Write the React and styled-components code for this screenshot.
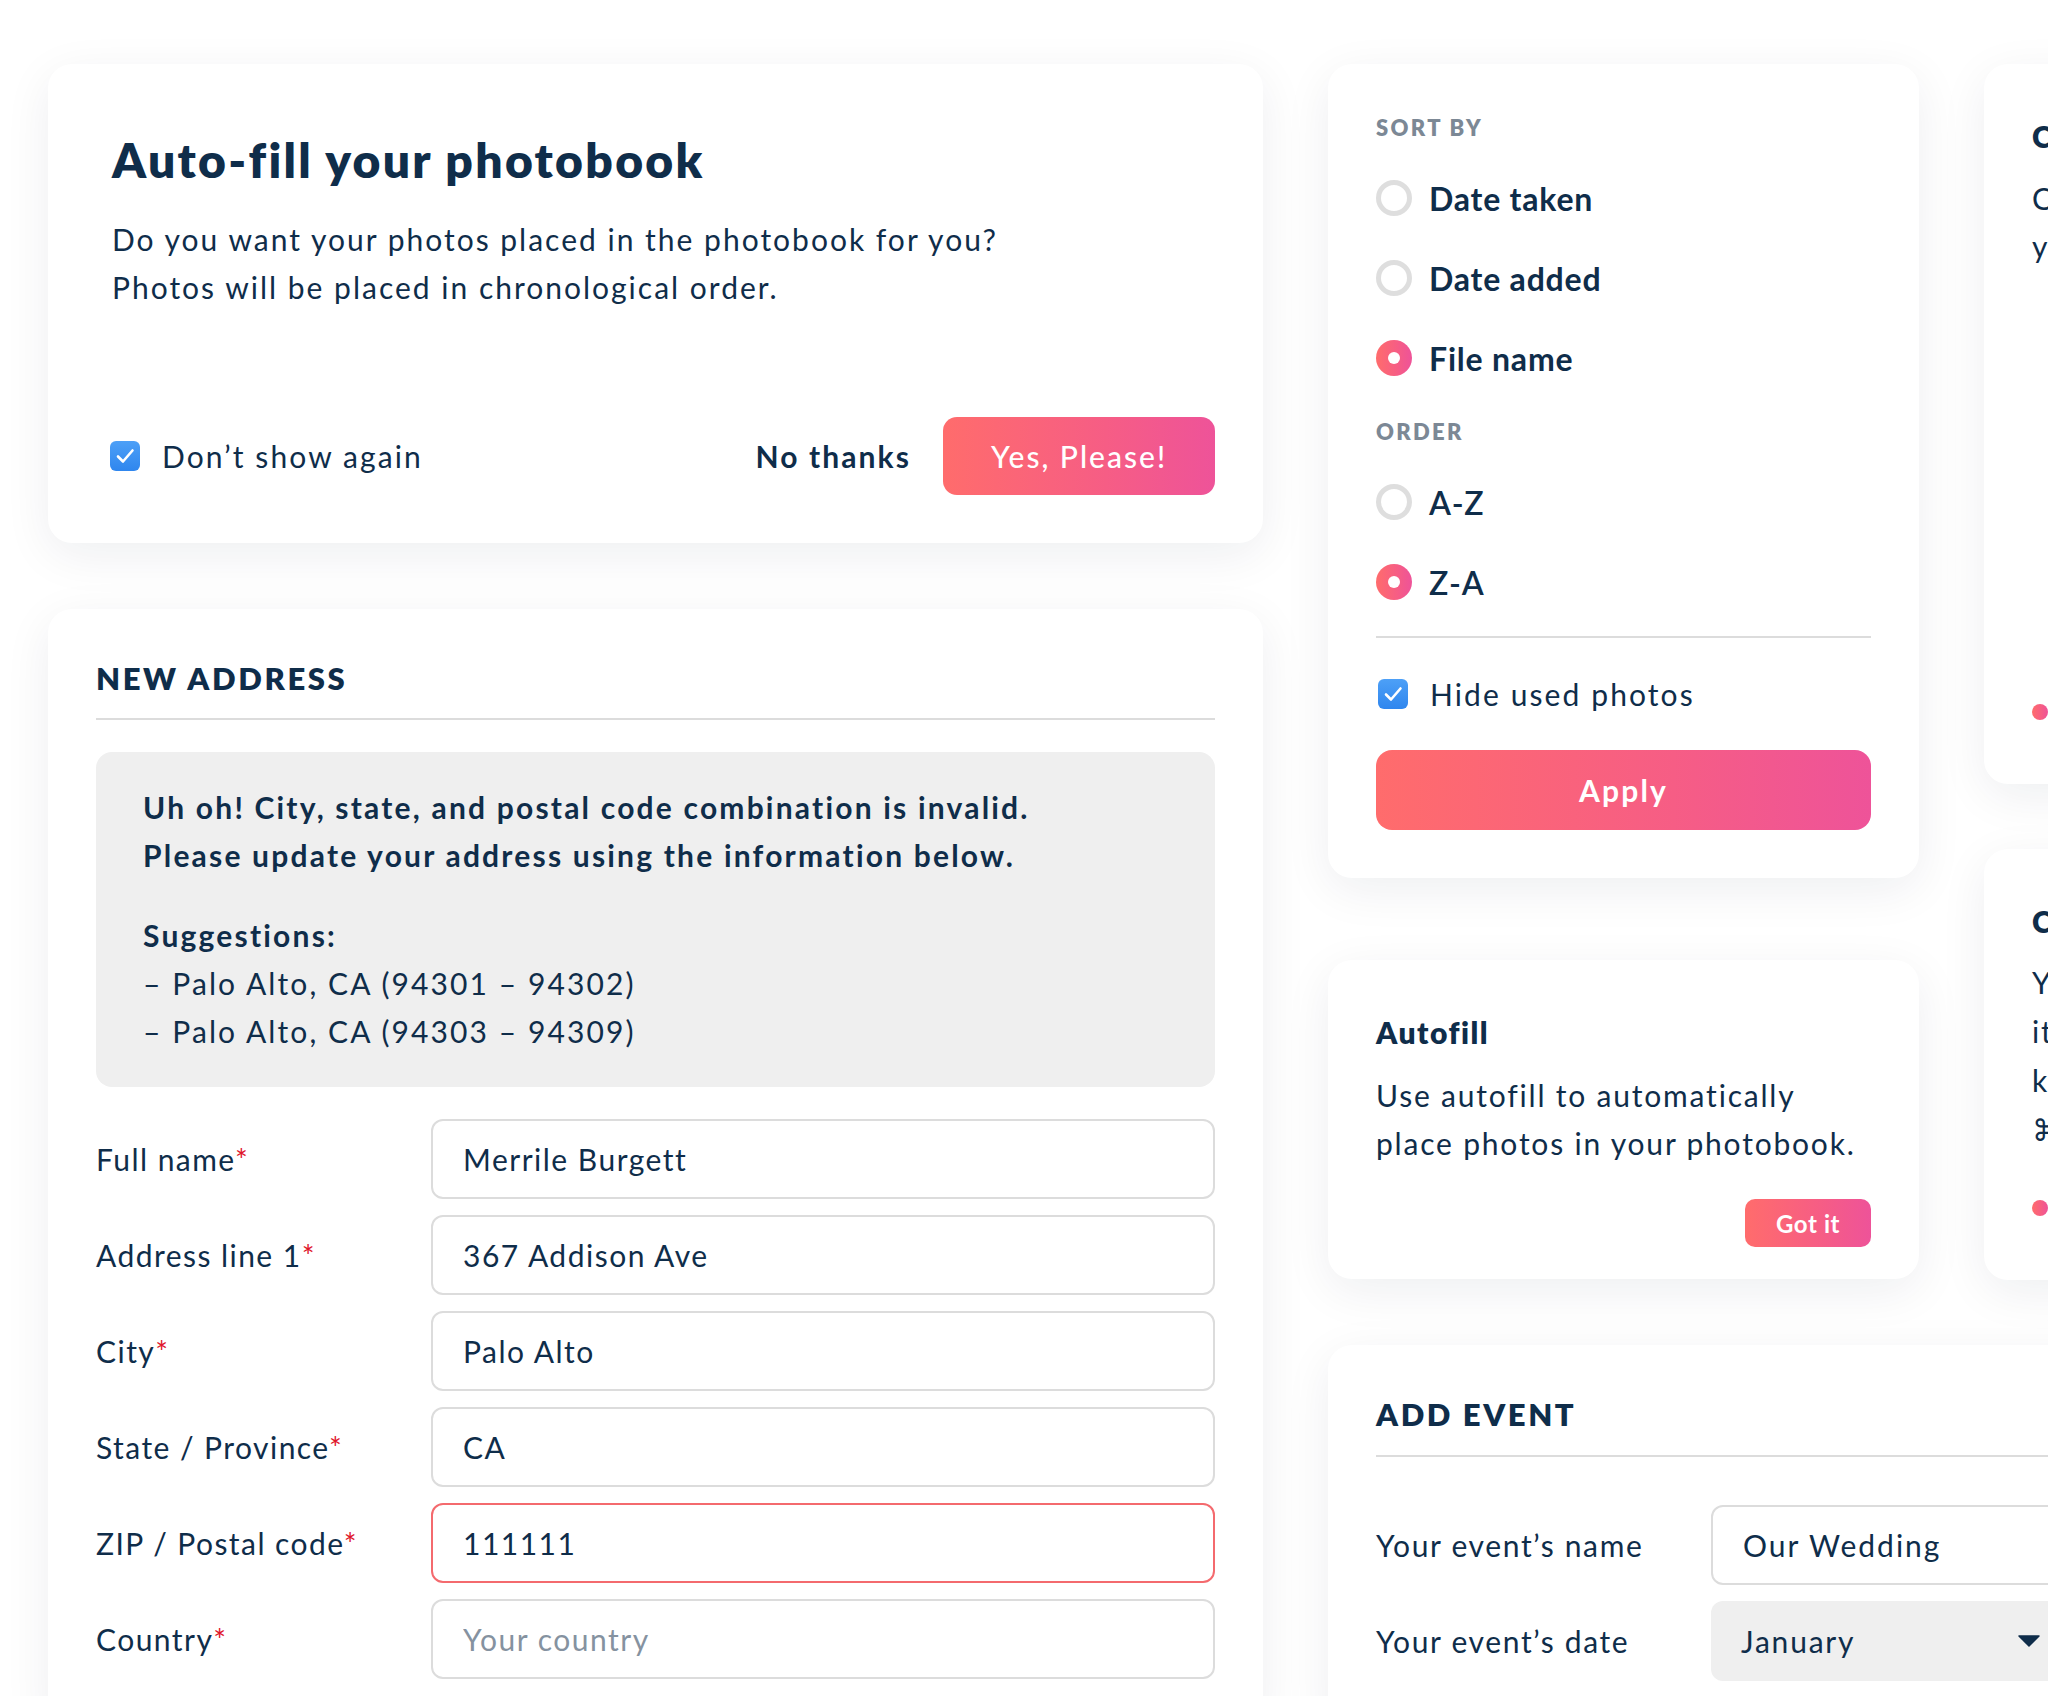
import React from 'react'
import styled, { createGlobalStyle, css } from 'styled-components'

const navy = '#0f2d4a'
const pink = 'linear-gradient(90deg, #ff6c6c 0%, #f65d85 60%, #ee5399 100%)'

const GlobalStyle = createGlobalStyle`
  html, body {
    margin: 0;
    padding: 0;
    background: #ffffff;
    overflow: hidden;
  }
  body {
    font-family: 'Lato', 'Open Sans', sans-serif;
    color: ${navy};
  }
  * { box-sizing: border-box; }
`

const Page = styled.div`
    width: 2048px;
    height: 1696px;
    overflow: hidden;
    display: flex;
    align-items: flex-start;
    gap: 65px;
    padding: 64px 0 0 48px;
`

const Column = styled.div`
    flex: none;
    display: flex;
    flex-direction: column;
    gap: ${p => p.$gap || 65}px;
`

const Row = styled.div`
    display: flex;
    align-items: flex-start;
    gap: 65px;
`

const Card = styled.div`
    position: relative;
    flex: none;
    background: #fff;
    border-radius: 24px;
    box-shadow: 0 12px 48px rgba(20, 35, 60, 0.07);
    width: ${p => p.$width || 591}px;
`

// notch pointing up, top right
const Popover = styled(Card)`
    padding: ${p => p.$pad || '48px'};
    &::before {
        content: '';
        position: absolute;
        z-index: -1;
        top: -11px;
        right: 27px;
        width: 23px;
        height: 23px;
        background: #fff;
        border-radius: 3px;
        transform: rotate(45deg);
        box-shadow: -3px -3px 12px rgba(20, 35, 60, 0.07);
    }
`

/* ---------- autofill dialog ---------- */

const DialogCard = styled(Card)`
    padding: 64px 48px 48px 64px;
`

const DialogTitle = styled.h1`
    margin: 0;
    font-size: 48px;
    line-height: 64px;
    font-weight: 800;
    letter-spacing: 2.3px;
`

const DialogText = styled.p`
    margin: 23px 0 0;
    font-size: 30px;
    line-height: 48px;
    letter-spacing: 2px;
`

const DialogFooter = styled.div`
    display: flex;
    align-items: center;
    margin-top: 106px;
`

const CheckLabel = styled.label`
    flex: ${p => (p.$grow ? 1 : 'none')};
    display: flex;
    align-items: center;
    gap: ${p => p.$space || 22}px;
    margin: ${p => p.$margin || '0 0 0 -2px'};
    font-size: 30px;
    letter-spacing: 2.1px;
    height: ${p => p.$height || 48}px;
`

const TextButton = styled.button`
    border: 0;
    background: none;
    padding: 0;
    margin-right: 32px;
    font: inherit;
    font-size: 30px;
    font-weight: 700;
    letter-spacing: 2.1px;
    color: ${navy};
`

const GradientButton = styled.button`
    border: 0;
    background: ${pink};
    color: #fff;
    font-family: inherit;
    display: flex;
    align-items: center;
    justify-content: center;
    ${p => p.$size === 'sm' && css`
        height: 48px;
        width: 126px;
        border-radius: 10px;
        font-size: 24px;
        font-weight: 700;
        letter-spacing: 0.6px;
    `}
    ${p => p.$size === 'lg' && css`
        height: 78px;
        width: 272px;
        border-radius: 14px;
        font-size: 30px;
        font-weight: 500;
        letter-spacing: 2px;
    `}
    ${p => p.$size === 'block' && css`
        height: 80px;
        width: 100%;
        border-radius: 16px;
        font-size: 30px;
        font-weight: 700;
        letter-spacing: 2.2px;
        margin-top: 16px;
    `}
`

/* ---------- checkbox / radio ---------- */

const CheckBox = () => (
    <svg width="30" height="30" viewBox="0 0 30 30">
        <defs>
            <linearGradient id="cb" x1="0" y1="0" x2="0" y2="1">
                <stop offset="0" stopColor="#4da0f7" />
                <stop offset="1" stopColor="#2f86ee" />
            </linearGradient>
        </defs>
        <rect x="0" y="0" width="30" height="30" rx="6" fill="url(#cb)" />
        <path d="M8 15.5 L13 20.5 L22.5 9.5" fill="none" stroke="#fff" strokeWidth="2.6" strokeLinecap="round" strokeLinejoin="round" />
    </svg>
)

const RadioDot = styled.span`
    flex: none;
    width: 36px;
    height: 36px;
    border-radius: 50%;
    ${p => p.$on ? css`
        background: ${pink};
        display: flex;
        align-items: center;
        justify-content: center;
        &::after {
            content: '';
            width: 12px;
            height: 12px;
            border-radius: 50%;
            background: #fff;
        }
    ` : css`
        border: 5px solid #dedede;
        background: #fff;
    `}
`

const RadioRow = styled.div`
    height: 80px;
    display: flex;
    align-items: center;
    gap: 17px;
    font-size: 32px;
    font-weight: ${p => p.$weight || 700};
    letter-spacing: 0.8px;
`

const GroupLabel = styled.div`
    font-size: 22px;
    line-height: 32px;
    font-weight: 800;
    letter-spacing: 2.3px;
    color: #7c8895;
    margin: ${p => p.$top || 0}px 0 14px;
`

const Rule = styled.div`
    height: 2px;
    background: #dcdcdc;
    margin-top: ${p => p.$top || 14}px;
`

/* ---------- address form ---------- */

const FormCard = styled(Card)`
    padding: 48px;
`

const SectionTitle = styled.h2`
    margin: -3px 0 0;
    font-size: 31px;
    line-height: 48px;
    font-weight: 800;
    letter-spacing: 2.6px;
`

const Alert = styled.div`
    margin-top: 32px;
    background: #efefef;
    border-radius: 16px;
    padding: 31px 47px 32px;
    font-size: 30px;
    line-height: 48px;
    letter-spacing: 2.1px;
`

const AlertStrong = styled.p`
    margin: 0 0 ${p => p.$gap || 0}px;
    font-weight: 700;
    letter-spacing: 2.2px;
`

const FormGrid = styled.div`
    display: grid;
    grid-template-columns: 335px 1fr;
    row-gap: 16px;
    align-items: center;
    margin-top: ${p => p.$top || 32}px;
`

const FieldLabel = styled.label`
    font-size: 30px;
    letter-spacing: ${p => p.$track || 1.45}px;
`

const Req = styled.span`
    color: #e0162b;
`

const Input = styled.input`
    height: 80px;
    width: 100%;
    border: 2px solid ${p => (p.$error ? '#f46a6e' : '#dcdcdc')};
    border-radius: 12px;
    padding: 0 30px;
    font-family: inherit;
    font-size: 30px;
    letter-spacing: ${p => p.$track || 1.5}px;
    color: ${navy};
    outline: none;
    &::placeholder {
        color: #8592a0;
    }
`

const Select = styled.div`
    height: 80px;
    border-radius: 12px;
    background: #efefef;
    padding: 0 30px;
    display: flex;
    align-items: center;
    justify-content: space-between;
    font-size: 30px;
    letter-spacing: 1.8px;
`

/* ---------- tooltip & peek cards ---------- */

const SmallTitle = styled.h3`
    margin: 0;
    font-size: 30px;
    line-height: 48px;
    font-weight: 800;
    letter-spacing: 1.5px;
`

const SmallText = styled.p`
    margin: ${p => p.$top || 15}px 0 0;
    font-size: 30px;
    line-height: ${p => p.$lh || 48}px;
    letter-spacing: 1.8px;
    white-space: nowrap;
`

const TipFooter = styled.div`
    display: flex;
    justify-content: flex-end;
    margin-top: 32px;
`

const PeekCard = styled(Card)`
    height: ${p => p.$height}px;
    padding: 48px;
    display: flex;
    flex-direction: column;
    overflow: hidden;
`

const Dots = styled.div`
    margin-top: auto;
    height: 48px;
    display: flex;
    align-items: center;
    gap: 12px;
`

const Dot = styled.span`
    width: 16px;
    height: 16px;
    border-radius: 50%;
    background: ${p => (p.$on ? pink : '#dedede')};
`

const Caret = () => (
    <svg width="22" height="12" viewBox="0 0 22 12">
        <path d="M1 1 H21 L11 11 Z" fill={navy} stroke={navy} strokeWidth="1.5" strokeLinejoin="round" />
    </svg>
)

const addressFields = [
    { label: 'Full name', value: 'Merrile Burgett' },
    { label: 'Address line 1', value: '367 Addison Ave' },
    { label: 'City', value: 'Palo Alto' },
    { label: 'State / Province', value: 'CA' },
    { label: 'ZIP / Postal code', value: '111111', error: true },
    { label: 'Country', value: '', placeholder: 'Your country' },
]

const App = () => {
    return (
        <>
            <GlobalStyle />
            <Page>
                <Column $gap={66}>
                    <DialogCard $width={1215}>
                        <DialogTitle>Auto-fill your photobook</DialogTitle>
                        <DialogText>
                            Do you want your photos placed in the photobook for you?<br />
                            Photos will be placed in chronological order.
                        </DialogText>
                        <DialogFooter>
                            <CheckLabel $grow><CheckBox /> Don’t show again</CheckLabel>
                            <TextButton>No thanks</TextButton>
                            <GradientButton $size="lg">Yes, Please!</GradientButton>
                        </DialogFooter>
                    </DialogCard>

                    <FormCard $width={1215}>
                        <SectionTitle>NEW ADDRESS</SectionTitle>
                        <Rule $top={16} />
                        <Alert>
                            <AlertStrong $gap={32}>
                                Uh oh! City, state, and postal code combination is invalid.<br />
                                Please update your address using the information below.
                            </AlertStrong>
                            <AlertStrong>Suggestions:</AlertStrong>
                            – Palo Alto, CA (94301 – 94302)<br />
                            – Palo Alto, CA (94303 – 94309)
                        </Alert>
                        <FormGrid>
                            {addressFields.map(f => (
                                <React.Fragment key={f.label}>
                                    <FieldLabel>{f.label}<Req>*</Req></FieldLabel>
                                    <Input defaultValue={f.value} placeholder={f.placeholder} $error={f.error} />
                                </React.Fragment>
                            ))}
                        </FormGrid>
                    </FormCard>
                </Column>

                <Column>
                    <Row>
                        <Column $gap={82}>
                            <Popover>
                                <GroupLabel>SORT BY</GroupLabel>
                                <RadioRow><RadioDot />Date taken</RadioRow>
                                <RadioRow><RadioDot />Date added</RadioRow>
                                <RadioRow><RadioDot $on />File name</RadioRow>
                                <GroupLabel $top={18}>ORDER</GroupLabel>
                                <RadioRow $weight={600}><RadioDot />A-Z</RadioRow>
                                <RadioRow $weight={600}><RadioDot $on />Z-A</RadioRow>
                                <Rule $top={14} />
                                <CheckLabel $height={80} $space={22} $margin="16px 0 0 2px"><CheckBox /> Hide used photos</CheckLabel>
                                <GradientButton $size="block">Apply</GradientButton>
                            </Popover>

                            <Popover $pad="48px 48px 32px">
                                <SmallTitle>Autofill</SmallTitle>
                                <SmallText>
                                    Use autofill to automatically<br />
                                    place photos in your photobook.
                                </SmallText>
                                <TipFooter>
                                    <GradientButton $size="sm">Got it</GradientButton>
                                </TipFooter>
                            </Popover>
                        </Column>

                        <Column>
                            <PeekCard $height={720}>
                                <SmallTitle>Change layout</SmallTitle>
                                <SmallText $top={14}>
                                    Choose a layout that suits<br />
                                    your photos best.
                                </SmallText>
                                <Dots><Dot $on /><Dot /><Dot /></Dots>
                            </PeekCard>
                            <PeekCard $height={431}>
                                <SmallTitle>Copy &amp; paste</SmallTitle>
                                <SmallText $top={13} $lh={49}>
                                    You can copy and paste<br />
                                    items anywhere using these<br />
                                    keyboard shortcuts:<br />
                                    ⌘C and ⌘V
                                </SmallText>
                                <Dots><Dot $on /><Dot /><Dot /></Dots>
                            </PeekCard>
                        </Column>
                    </Row>

                    <FormCard $width={790}>
                        <SectionTitle>ADD EVENT</SectionTitle>
                        <Rule $top={17} />
                        <FormGrid $top={48}>
                            <FieldLabel $track={1.65}>Your event’s name</FieldLabel>
                            <Input defaultValue="Our Wedding" $track={2} />
                            <FieldLabel $track={1.65}>Your event’s date</FieldLabel>
                            <Select>January<Caret /></Select>
                        </FormGrid>
                    </FormCard>
                </Column>
            </Page>
        </>
    )
}

export default App
